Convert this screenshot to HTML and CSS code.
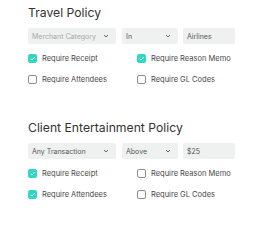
FILE: index.html
```html
<!DOCTYPE html>
<html>
<head>
<meta charset="utf-8">
<link rel="stylesheet" href="styles.css">
</head>
<body>
<div class="page">
  <section class="policy">
    <h2 class="title">Travel Policy</h2>
    <div class="filters">
      <div class="select w1 placeholder"><span>Merchant Category</span><svg class="chev" viewBox="0 0 6 4"><path d="M1 1 L3 3 L5 1"/></svg></div>
      <div class="select w2"><span>In</span><svg class="chev" viewBox="0 0 6 4"><path d="M1 1 L3 3 L5 1"/></svg></div>
      <div class="input w3">Airlines</div>
    </div>
    <div class="checks">
      <label class="check"><span class="box on"><svg viewBox="0 0 10 10"><path d="M2.8 5.2 L4.4 6.8 L7.3 3.6"/></svg></span>Require Receipt</label>
      <label class="check"><span class="box on"><svg viewBox="0 0 10 10"><path d="M2.8 5.2 L4.4 6.8 L7.3 3.6"/></svg></span>Require Reason Memo</label>
      <label class="check"><span class="box"></span>Require Attendees</label>
      <label class="check"><span class="box"></span>Require GL Codes</label>
    </div>
  </section>
  <section class="policy second">
    <h2 class="title">Client Entertainment Policy</h2>
    <div class="filters">
      <div class="select w1"><span>Any Transaction</span><svg class="chev" viewBox="0 0 6 4"><path d="M1 1 L3 3 L5 1"/></svg></div>
      <div class="select w2"><span>Above</span><svg class="chev" viewBox="0 0 6 4"><path d="M1 1 L3 3 L5 1"/></svg></div>
      <div class="input w3">$25</div>
    </div>
    <div class="checks">
      <label class="check"><span class="box on"><svg viewBox="0 0 10 10"><path d="M2.8 5.2 L4.4 6.8 L7.3 3.6"/></svg></span>Require Receipt</label>
      <label class="check"><span class="box"></span>Require Reason Memo</label>
      <label class="check"><span class="box on"><svg viewBox="0 0 10 10"><path d="M2.8 5.2 L4.4 6.8 L7.3 3.6"/></svg></span>Require Attendees</label>
      <label class="check"><span class="box"></span>Require GL Codes</label>
    </div>
  </section>
</div>
</body>
</html>
```
FILE: styles.css
```css
html, body {
  margin: 0;
  padding: 0;
  background: #ffffff;
}
body {
  font-family: Inter, "Noto Sans", sans-serif;
  color: #3a3a3a;
}
.page {
  padding: 4px 0 0 28px;
}
.policy {
  display: flex;
  flex-direction: column;
}
.second {
  margin-top: 29px;
}
.title {
  margin: 0;
  font-size: 12.2px;
  line-height: 17px;
  font-weight: 400;
  color: #333333;
}
.filters {
  display: flex;
  gap: 6px;
  margin-top: 7px;
}
.select, .input {
  height: 16px;
  background: #eef1f0;
  border-radius: 2px;
  font-size: 7px;
  color: #555;
  display: flex;
  align-items: center;
  padding: 0 4px;
  box-sizing: border-box;
}
.select {
  justify-content: space-between;
}
.placeholder span {
  color: #a4a8a8;
}
.w1 { width: 88px; }
.w2 { width: 56px; }
.w3 { width: 52px; margin-left: -1px; }
.chev {
  width: 6px;
  height: 4px;
  margin-right: 3px;
  fill: none;
  stroke: #666;
  stroke-width: 1;
}
.checks {
  display: grid;
  grid-template-columns: 109px auto;
  grid-auto-rows: 21px;
  margin-top: 4px;
}
.check {
  display: flex;
  align-items: center;
  gap: 5px;
  font-size: 7.5px;
  color: #474747;
}
.box {
  width: 9px;
  height: 9px;
  box-sizing: border-box;
  border: 1px solid #8d8f8f;
  border-radius: 2px;
  display: flex;
  align-items: center;
  justify-content: center;
}
.box.on {
  background: #2fd8c3;
  border-color: #2fd8c3;
}
.box svg {
  width: 9px;
  height: 9px;
  fill: none;
  stroke: #ffffff;
  stroke-width: 1;
  flex: none;
}
```
